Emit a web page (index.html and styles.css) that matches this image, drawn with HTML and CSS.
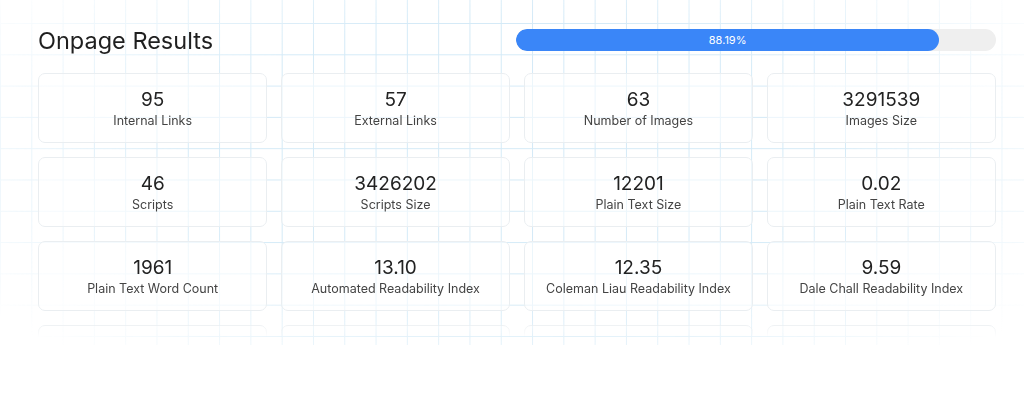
FILE: index.html
```html
<!DOCTYPE html>
<html lang="en">
<head>
  <meta charset="UTF-8" />
  <meta name="viewport" content="width=device-width, initial-scale=1.0" />
  <title>Onpage Results</title>
  <link rel="stylesheet" href="styles.css">
</head>
<body>
  <div class="grid-bg"></div>

  <div class="panel">
    <div class="header">
      <h2>Onpage Results</h2>
      <div class="progress">
        <div class="progress-fill" style="width: 88.19%">88.19%</div>
      </div>
    </div>

    <div class="cards">
      <div class="card"><div class="num">95</div><div class="label">Internal Links</div></div>
      <div class="card"><div class="num">57</div><div class="label">External Links</div></div>
      <div class="card"><div class="num">63</div><div class="label">Number of Images</div></div>
      <div class="card"><div class="num">3291539</div><div class="label">Images Size</div></div>

      <div class="card"><div class="num">46</div><div class="label">Scripts</div></div>
      <div class="card"><div class="num">3426202</div><div class="label">Scripts Size</div></div>
      <div class="card"><div class="num">12201</div><div class="label">Plain Text Size</div></div>
      <div class="card"><div class="num">0.02</div><div class="label">Plain Text Rate</div></div>

      <div class="card"><div class="num">1961</div><div class="label">Plain Text Word Count</div></div>
      <div class="card"><div class="num">13.10</div><div class="label">Automated Readability Index</div></div>
      <div class="card"><div class="num">12.35</div><div class="label">Coleman Liau Readability Index</div></div>
      <div class="card"><div class="num">9.59</div><div class="label">Dale Chall Readability Index</div></div>

      <!-- next row is scrolled out of view -->
      <div class="card"></div>
      <div class="card"></div>
      <div class="card"></div>
      <div class="card"></div>
    </div>
  </div>
</body>
</html>
```

FILE: styles.css
```css
body {
  margin: 0;
  font-family: Inter, "Noto Sans", sans-serif;
  background: #fff;
  color: #222;
}
.grid-bg {
  position: absolute;
  left: 0;
  top: 0;
  width: 1024px;
  height: 345px;
  background-image:
    linear-gradient(to right, #d4eaf7 1px, transparent 1px),
    linear-gradient(to bottom, #d4eaf7 1px, transparent 1px);
  background-size: 31.3px 31.3px;
  background-position: 0 23px;
  -webkit-mask-image: radial-gradient(ellipse 62% 80% at 50% 45%, #000 50%, transparent 100%);
  mask-image: radial-gradient(ellipse 62% 80% at 50% 45%, #000 50%, transparent 100%);
}
.panel {
  position: relative;
  padding: 25px 28px 0 38px;
  height: 312px;
  overflow: hidden;
  -webkit-mask-image: linear-gradient(to bottom, #000 322px, transparent 337px);
  mask-image: linear-gradient(to bottom, #000 322px, transparent 337px);
}
.header {
  display: flex;
  align-items: center;
  justify-content: space-between;
  height: 30px;
  margin-bottom: 18px;
}
.header h2 {
  margin: 0;
  font-size: 23.5px;
  font-weight: 400;
  color: #1f1f1f;
}
.progress {
  width: 480px;
  height: 22px;
  background: #efefef;
  border-radius: 11px;
  overflow: hidden;
}
.progress-fill {
  height: 100%;
  background: #3a86f8;
  border-radius: 11px;
  color: #fff;
  font-size: 11px;
  line-height: 22px;
  text-align: center;
}
.cards {
  display: grid;
  grid-template-columns: repeat(4, 1fr);
  gap: 14px 13.5px;
}
.card {
  height: 68px;
  border: 1px solid #eaeef1;
  border-radius: 7px;
  background: rgba(255, 255, 255, 0.55);
  display: flex;
  flex-direction: column;
  align-items: center;
  justify-content: center;
}
.num {
  font-size: 19px;
  color: #222;
  line-height: 22px;
  margin-top: 4px;
}
.label {
  font-size: 12.5px;
  color: #444;
  line-height: 20px;
}
```
